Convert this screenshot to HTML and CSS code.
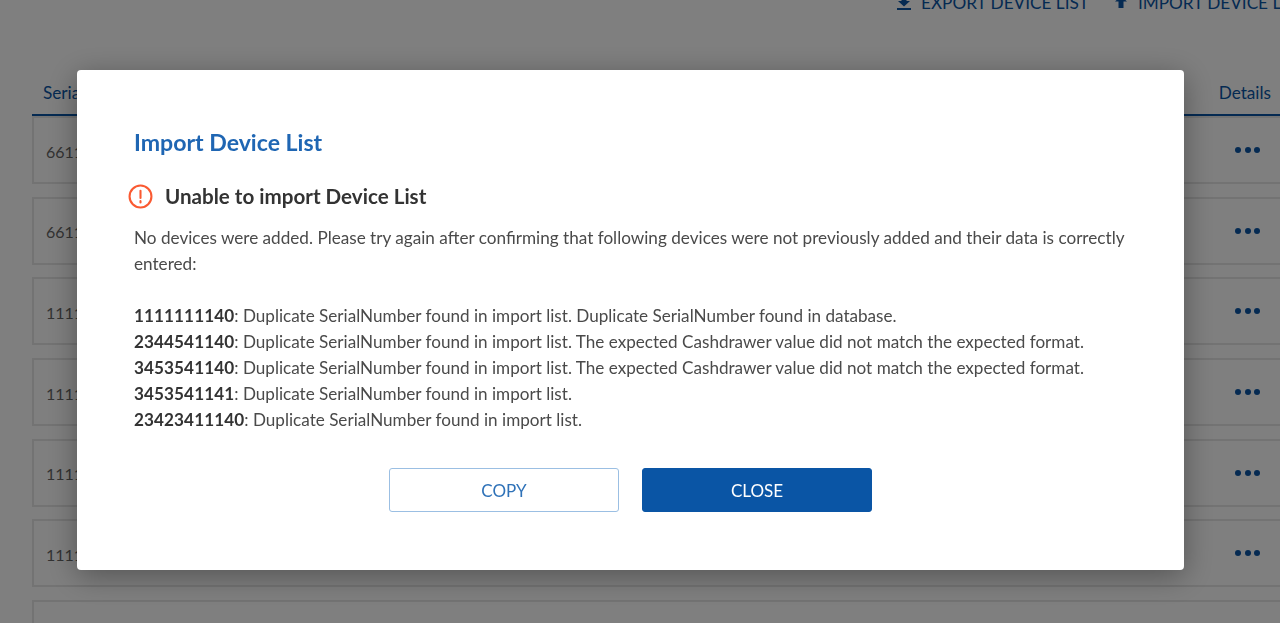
FILE: index.html
```html
<!DOCTYPE html>
<html lang="en">
  <head>
    <meta charset="UTF-8" />
    <title>Device List</title>
    <link rel="stylesheet" href="styles.css">
  </head>
  <body>
    <div class="page">
      <div class="toolbar">
        <a class="toolLink">
          <svg class="toolIcon" viewBox="0 0 14 14"><path d="M4.500 0h5v5H13L7 10.500 1 5h3.500zM0 12h14v2H0z" /></svg>
          EXPORT DEVICE LIST
        </a>
        <a class="toolLink">
          <svg class="toolIcon" viewBox="0 0 14 14"><path d="M7 0l6 5.500H9.500V12h-5V5.500H1z" /></svg>
          IMPORT DEVICE LIST
        </a>
      </div>
      <div class="tableHead">
        <span>Serial Number</span>
        <span>Details</span>
      </div>
      <div class="rows">
        <div class="row"><span>66110001</span><span class="dots"><i></i><i></i><i></i></span></div>
        <div class="row"><span>66110002</span><span class="dots"><i></i><i></i><i></i></span></div>
        <div class="row"><span>11111111</span><span class="dots"><i></i><i></i><i></i></span></div>
        <div class="row"><span>11111112</span><span class="dots"><i></i><i></i><i></i></span></div>
        <div class="row"><span>11111113</span><span class="dots"><i></i><i></i><i></i></span></div>
        <div class="row"><span>11111114</span><span class="dots"><i></i><i></i><i></i></span></div>
        <div class="row"></div>
      </div>
    </div>

    <div class="overlay">
      <div class="modal">
        <h2 class="modalTitle">Import Device List</h2>
        <div class="errorHead">
          <svg class="errorIcon" viewBox="0 0 24 24">
            <circle cx="12" cy="12" r="10.500" />
            <path d="M12 6.500v7" />
            <path d="M12 16.300v1.500" />
          </svg>
          <h3>Unable to import Device List</h3>
        </div>
        <p class="intro">
          No devices were added. Please try again after confirming that following devices were not previously added and their data is correctly entered:
        </p>
        <ul class="errors">
          <li><b>1111111140</b>: Duplicate SerialNumber found in import list. Duplicate SerialNumber found in database.</li>
          <li><b>2344541140</b>: Duplicate SerialNumber found in import list. The expected Cashdrawer value did not match the expected format.</li>
          <li><b>3453541140</b>: Duplicate SerialNumber found in import list. The expected Cashdrawer value did not match the expected format.</li>
          <li><b>3453541141</b>: Duplicate SerialNumber found in import list.</li>
          <li><b>23423411140</b>: Duplicate SerialNumber found in import list.</li>
        </ul>
        <div class="actions">
          <button class="btn btnCopy">COPY</button>
          <button class="btn btnClose">CLOSE</button>
        </div>
      </div>
    </div>
  </body>
</html>
```

FILE: styles.css
```css
* {
  box-sizing: border-box;
}
html, body {
  margin: 0;
  height: 100%;
  overflow: hidden;
}
body {
  font-family: Lato, "Open Sans", sans-serif;
  background: #fff;
  color: #333;
}
.page {
  height: 623px;
  overflow: hidden;
  padding-left: 32px;
}
.toolbar {
  display: flex;
  gap: 25px;
  height: 75px;
  margin-top: -8px;
  padding-left: 865px;
  white-space: nowrap;
}
.toolLink {
  display: flex;
  gap: 10px;
  height: 20px;
  align-items: center;
  font-size: 17.200px;
  color: #0a55a5;
}
.toolIcon {
  flex: none;
  width: 14px;
  height: 14px;
  margin-top: 2px;
  fill: #0a55a5;
}
.tableHead {
  display: flex;
  justify-content: space-between;
  align-items: center;
  height: 49px;
  padding: 4px 9px 0 11px;
  border-bottom: 2px solid #0a55a5;
  font-size: 17.200px;
  color: #0a55a5;
}
.rows {
  display: flex;
  flex-direction: column;
  gap: 12.700px;
}
.row {
  display: flex;
  justify-content: space-between;
  align-items: center;
  flex: none;
  height: 68px;
  margin-right: -4px;
  padding: 2px 22px 0 12px;
  border: 2px solid #e6e6e6;
  font-size: 16px;
  color: #666;
}
.dots {
  display: flex;
  gap: 3.300px;
  margin-top: -2px;
}
.dots i {
  width: 6px;
  height: 6px;
  border-radius: 50%;
  background: #0a55a5;
}
.overlay {
  position: fixed;
  inset: 0;
  background: rgba(0, 0, 0, 0.5);
}
.modal {
  position: absolute;
  left: 77px;
  top: 70px;
  width: 1107px;
  height: 500px;
  padding: 57px 57px 0;
  background: #fff;
  border-radius: 4px;
  box-shadow: 0 6px 30px rgba(0, 0, 0, 0.35);
}
.modalTitle {
  margin: 0;
  font-size: 23.100px;
  line-height: 30px;
  font-weight: 700;
  color: #1f66b3;
}
.errorHead {
  display: flex;
  align-items: center;
  gap: 12px;
  margin: 26px 0 0 -6px;
}
.errorHead h3 {
  margin: 0;
  font-size: 20.600px;
  line-height: 26px;
  font-weight: 700;
  color: #333;
}
.errorIcon {
  width: 25px;
  height: 25px;
  fill: none;
  stroke: #fa5a32;
  stroke-width: 2;
  stroke-linecap: round;
}
.intro {
  margin: 16px 0 0;
  font-size: 17.150px;
  line-height: 26px;
  color: #4a4a4a;
}
.errors {
  list-style: none;
  margin: 26px 0 0;
  padding: 0;
  font-size: 17.120px;
  line-height: 26px;
  color: #4a4a4a;
}
.errors b {
  letter-spacing: 0.100px;
  color: #333;
}
.actions {
  display: flex;
  justify-content: center;
  gap: 23px;
  margin-top: 35px;
}
.btn {
  width: 230px;
  height: 44px;
  font-family: inherit;
  font-size: 17px;
  border-radius: 3px;
}
.btnCopy {
  background: #fff;
  border: 1px solid #9bbfe3;
  color: #2f72b8;
}
.btnClose {
  background: #0a55a5;
  border: 1px solid #0a55a5;
  color: #fff;
}
```
